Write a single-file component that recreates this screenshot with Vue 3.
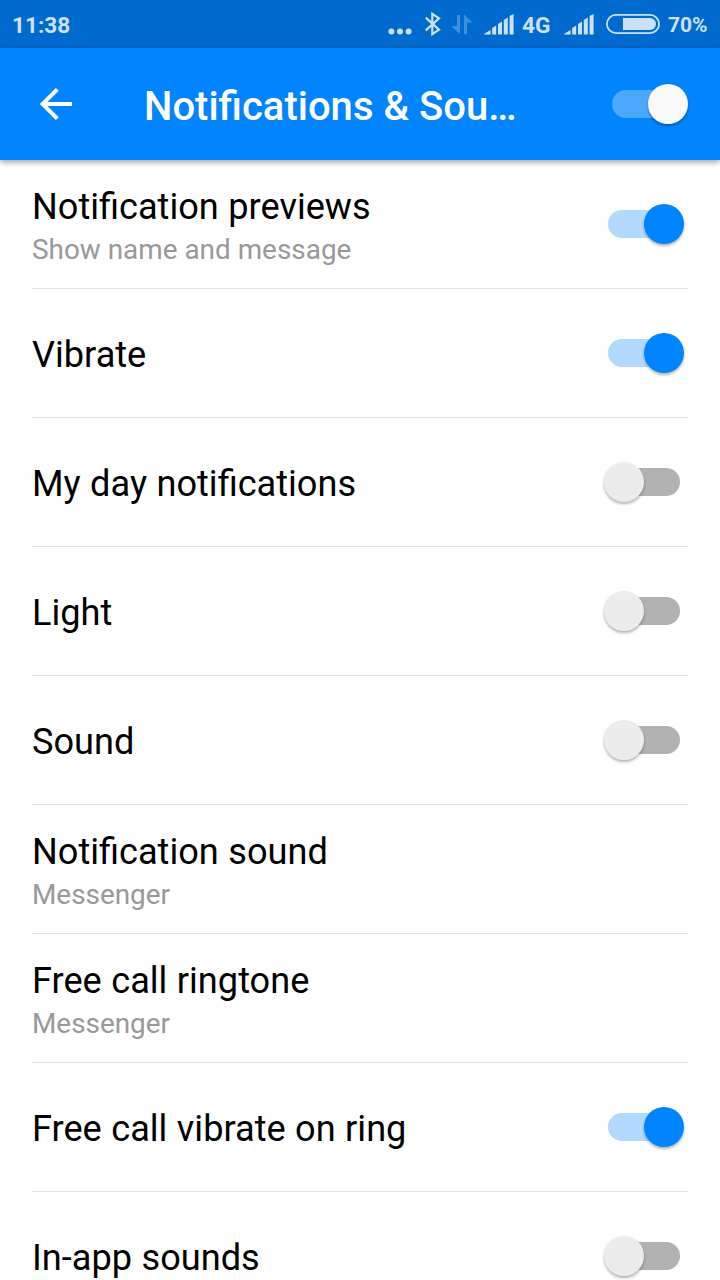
<script setup>
const rows = [
  { title: 'Notification previews', sub: 'Show name and message', on: true },
  { title: 'Vibrate', on: true },
  { title: 'My day notifications', on: false },
  { title: 'Light', on: false },
  { title: 'Sound', on: false },
  { title: 'Notification sound', sub: 'Messenger' },
  { title: 'Free call ringtone', sub: 'Messenger' },
  { title: 'Free call vibrate on ring', on: true },
  { title: 'In-app sounds', on: false },
]
</script>

<template>
  <div class="screen">
    <div class="status">
      <span class="time">11:38</span>
      <svg class="dots" width="24" height="48" viewBox="388 0 24 48">
        <circle cx="391.4" cy="31.5" r="3" /><circle cx="400" cy="31.5" r="3" /><circle cx="408.6" cy="31.5" r="3" />
      </svg>
      <svg class="bt" width="18" height="48" viewBox="424 0 18 48">
        <path d="M425.8 17.6 L439 29.6 L432.3 34.2 V13.8 L439 18.4 L425.8 30.4" />
      </svg>
      <svg class="data" width="22" height="48" viewBox="451 0 22 48">
        <path d="M457 15H460V34L451.5 26.2H457Z" /><path d="M464 34H467V22.5H472.5L464 14.5Z" />
      </svg>
      <svg class="sig" width="30" height="48" viewBox="484 0 30 48">
        <path d="M484 34.5V34L490.5 30V34.5Z M492.2 34.5V28L496.2 25.4V34.5Z M498 34.5V24L502 21.4V34.5Z M503.8 34.5V20L507.8 17.4V34.5Z M509.6 34.5V16L513.6 13.9V34.5Z" />
      </svg>
      <span class="net">4G</span>
      <svg class="sig second" width="30" height="48" viewBox="484 0 30 48">
        <path d="M484 34.5V34L490.5 30V34.5Z M492.2 34.5V28L496.2 25.4V34.5Z M498 34.5V24L502 21.4V34.5Z M503.8 34.5V20L507.8 17.4V34.5Z M509.6 34.5V16L513.6 13.9V34.5Z" />
      </svg>
      <svg class="battery" width="54" height="48" viewBox="606 0 54 48">
        <rect class="shell" x="606.9" y="14.9" width="52.2" height="18.2" rx="9.1" />
        <path d="M623 18H650a6 6 0 0 1 0 12H623Z" />
      </svg>
      <span class="pct">70%</span>
    </div>
    <header class="bar">
      <svg class="back" width="34" height="34" viewBox="39 87 34 34">
        <path d="M72 104H42.5M57.3 89.3L42.6 104L57.3 118.7" />
      </svg>
      <h1>Notifications &amp; Sou…</h1>
      <div class="switch head on"><i class="track"></i><i class="knob"></i></div>
    </header>
    <main>
      <div v-for="row in rows" :key="row.title" class="row">
        <div class="text">
          <div class="title">{{ row.title }}</div>
          <div v-if="row.sub" class="sub">{{ row.sub }}</div>
        </div>
        <div v-if="row.on !== undefined" class="switch" :class="{ on: row.on }">
          <i class="track"></i><i class="knob"></i>
        </div>
      </div>
    </main>
  </div>
</template>

<style>
html, body { overflow: hidden; background: #fff; }
</style>

<style scoped>
.screen {
  width: 720px;
  height: 1280px;
  overflow: hidden;
  background: #fff;
  font-family: Roboto, "Noto Sans", sans-serif;
}
.status {
  display: flex;
  box-sizing: border-box;
  height: 48px;
  padding-left: 12px;
  background: #006acf;
  color: #cce1f5;
  fill: #cce1f5;
  font-weight: 700;
  line-height: 50px;
  white-space: nowrap;
}
.status svg { flex: none; }
.time { width: 376px; font-size: 22.6px; line-height: 52px; }
.bt { margin-left: 12px; fill: none; stroke: #cce1f5; stroke-width: 2.2; }
.data { margin-left: 9px; fill: #3f8fdb; }
.sig { margin-left: 11px; }
.net { width: 42px; margin-left: 8px; font-size: 22.7px; line-height: 52px; }
.sig.second { margin-left: 0; }
.battery { margin-left: 12px; }
.shell { fill: none; stroke: #cce1f5; stroke-width: 1.8; }
.pct { margin-left: 8px; font-size: 21px; }
.bar {
  position: relative;
  display: flex;
  align-items: center;
  box-sizing: border-box;
  height: 112px;
  padding: 0 32px 0 39px;
  background: #0084ff;
  color: #fff;
  box-shadow: 0 2px 6px rgba(0, 0, 0, 0.4);
}
.back { flex: none; fill: none; stroke: #fff; stroke-width: 4; }
h1 {
  flex: 1;
  margin: 0;
  padding: 6px 0 0 71px;
  font-size: 40px;
  font-weight: 500;
  line-height: 48px;
  white-space: nowrap;
}
.row {
  display: flex;
  align-items: center;
  justify-content: space-between;
  box-sizing: border-box;
  height: 129px;
  margin: 0 32px;
  border-bottom: 1px solid #e1e1e1;
}
.text { padding-top: 4px; white-space: nowrap; }
.title { color: #000; font-size: 36.15px; line-height: 44px; word-spacing: 0.5px; }
.sub { padding-top: 1px; margin-bottom: -3px; color: #999; font-size: 27.9px; line-height: 40px; }
.switch {
  display: flex;
  align-items: center;
  flex: none;
  width: 72px;
  height: 40px;
  margin-right: 8px;
}
.switch.head { margin-right: 4px; }
.track { flex: none; width: 72px; height: 28px; border-radius: 14px; background: #b2b2b2; }
.knob {
  flex: none;
  width: 40px;
  height: 40px;
  margin-left: -76px;
  border-radius: 50%;
  background: #ececec;
  box-shadow: 0 2px 3px rgba(0, 0, 0, 0.3);
}
.on .track { background: #b2daff; }
.on .knob { margin-left: -36px; background: #0084ff; }
.head .track { background: #4da9ff; }
.head .knob { background: #fafafa; }
</style>
